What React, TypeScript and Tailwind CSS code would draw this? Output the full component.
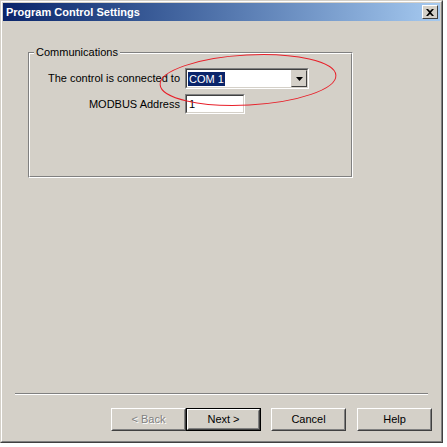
import React from "react";

const font = { fontFamily: '"Liberation Sans", Arial, sans-serif' };

const WinButton: React.FC<{ label: string; disabled?: boolean; primary?: boolean }> = ({
  label,
  disabled,
  primary,
}) => (
  <div
    className={
      "flex h-[23px] w-[75px] items-center justify-center bg-[#D4D0C8] text-[11px] " +
      (primary ? "border border-black" : "")
    }
  >
    <div className="flex h-full w-full items-center justify-center border border-t-white border-l-white border-r-[#404040] border-b-[#404040]">
      <div className="flex h-full w-full items-center justify-center border border-transparent border-r-[#808080] border-b-[#808080]">
        {disabled ? (
          <span className="text-[#808080] [text-shadow:1px_1px_0_#ffffff]">{label}</span>
        ) : (
          <span className="text-black">{label}</span>
        )}
      </div>
    </div>
  </div>
);

export default function App() {
  return (
    <div className="h-[447px] w-[447px] bg-white" style={font}>
      <div className="flex h-[443px] w-[443px] flex-col border border-t-[#D4D0C8] border-l-[#D4D0C8] border-r-[#404040] border-b-[#404040] bg-[#D4D0C8]">
        <div className="flex h-full flex-col border border-t-white border-l-white border-r-[#808080] border-b-[#808080] p-px">
          {/* title bar */}
          <div className="flex h-[18px] items-center justify-between bg-gradient-to-r from-[#0A246A] to-[#A6CAF0] pl-[3px] pr-[2px]">
            <span className="text-[11px] font-bold text-white">Program Control Settings</span>
            <div className="flex h-[14px] w-[16px] items-center justify-center border border-t-white border-l-white border-r-[#404040] border-b-[#404040] bg-[#D4D0C8]">
              <svg width="8" height="7" viewBox="0 0 8 7">
                <path d="M0 0 L2 0 L4 2 L6 0 L8 0 L5 3.5 L8 7 L6 7 L4 5 L2 7 L0 7 L3 3.5 Z" fill="black" />
              </svg>
            </div>
          </div>

          {/* content */}
          <div className="flex flex-1 flex-col">
            <div className="ml-[25px] mt-[31px] w-[325px]">
              <div className="relative h-[126px] border border-t-[#808080] border-l-[#808080] border-r-white border-b-white">
                <div className="h-full border border-t-white border-l-white border-r-[#808080] border-b-[#808080]">
                  <div className="-mt-[9px] ml-[4px] w-fit bg-[#D4D0C8] px-[2px] text-[11px] leading-[14px] text-black">
                    Communications
                  </div>
                  <div className="mt-[9px] grid grid-cols-[150px_auto] items-center gap-x-[5px] gap-y-[5px] text-[11px]">
                    <span className="text-right text-black">The control is connected to</span>
                    <div className="flex h-[21px] w-[124px] border border-t-[#808080] border-l-[#808080] border-r-white border-b-white">
                      <div className="flex flex-1 items-center border border-t-[#404040] border-l-[#404040] border-r-[#D4D0C8] border-b-[#D4D0C8] bg-white pl-px">
                        <span className="bg-[#0A246A] px-px leading-[14px] text-white">COM 1</span>
                        <div className="ml-auto flex h-[17px] w-[16px] items-center justify-center border border-t-[#D4D0C8] border-l-[#D4D0C8] border-r-[#404040] border-b-[#404040] bg-[#D4D0C8]">
                          <svg width="7" height="4" viewBox="0 0 7 4">
                            <path d="M0 0 L7 0 L3.5 4 Z" fill="black" />
                          </svg>
                        </div>
                      </div>
                    </div>
                    <span className="text-right text-black">MODBUS Address</span>
                    <div className="flex h-[20px] w-[60px] border border-t-[#808080] border-l-[#808080] border-r-white border-b-white">
                      <div className="flex flex-1 items-center border border-t-[#404040] border-l-[#404040] border-r-[#D4D0C8] border-b-[#D4D0C8] bg-white pl-[2px] text-black">
                        1
                      </div>
                    </div>
                  </div>
                </div>
                {/* red annotation ellipse */}
                <svg
                  className="pointer-events-none absolute left-[129px] top-[0px] overflow-visible"
                  width="180"
                  height="56"
                  viewBox="0 0 180 56"
                >
                  <ellipse
                    cx="90"
                    cy="27"
                    rx="88"
                    ry="25"
                    fill="none"
                    stroke="#E8202A"
                    strokeWidth="1"
                    transform="rotate(-3 90 27)"
                  />
                </svg>
              </div>
            </div>

            <div className="flex-1" />

            {/* separator */}
            <div className="mx-[12px] border-t border-t-[#808080] border-b border-b-white" />

            <div className="mb-[9px] mt-[13px] flex justify-end pr-[8px]">
              <WinButton label="< Back" disabled />
              <WinButton label="Next >" primary />
              <div className="w-[10px]" />
              <WinButton label="Cancel" />
              <div className="w-[11px]" />
              <WinButton label="Help" />
            </div>
          </div>
        </div>
      </div>
    </div>
  );
}
